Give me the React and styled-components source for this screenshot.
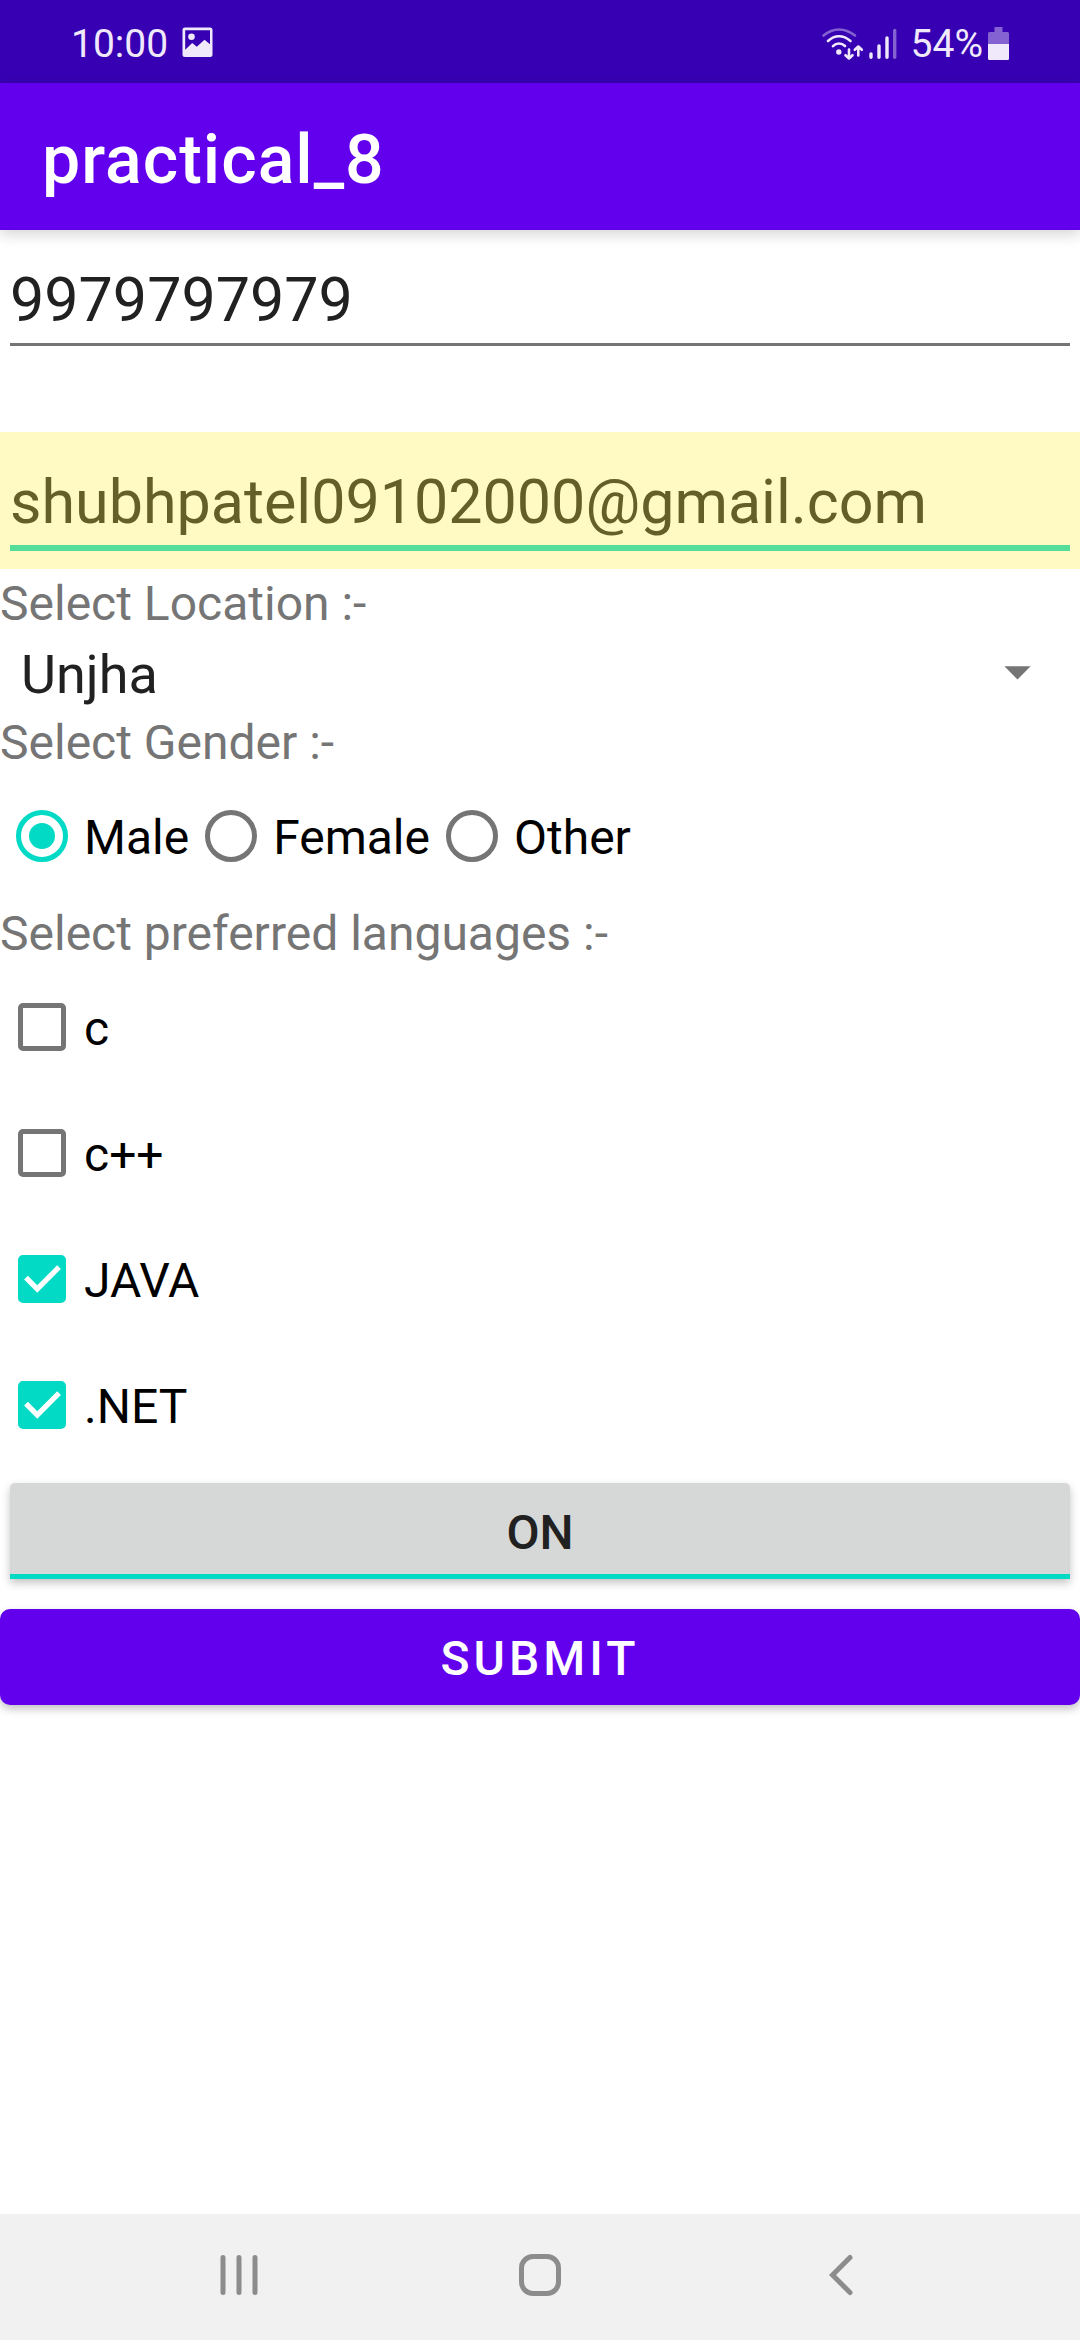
import React, { useState } from "react";
import styled, { createGlobalStyle } from "styled-components";

const GlobalStyle = createGlobalStyle`
  *, *::before, *::after { box-sizing: border-box; }
  body { margin: 0; background: #fff; }
  body, input, select, button { font-family: Roboto, "Liberation Sans", sans-serif; }
`;

const Screen = styled.div`
  display: flex;
  flex-direction: column;
  min-height: 100vh;
`;

const StatusBar = styled.div`
  display: flex;
  align-items: center;
  justify-content: space-between;
  padding: 20px 71px 16px;
  background: #3700b3;
  color: #f0e9fb;
`;

const StatusGroup = styled.div`
  display: flex;
  align-items: center;
  gap: ${(p) => p.$gap}px;
`;

const StatusText = styled.span`
  padding-top: 2px;
  font-size: 39px;
  line-height: 45px;
`;

const AppBar = styled.header`
  display: flex;
  align-items: center;
  height: 147px;
  padding: 6px 42px 0;
  background: #6200ee;
  box-shadow: 0 4px 14px rgba(0, 0, 0, 0.18);
`;

const Title = styled.h1`
  margin: 0;
  color: #fff;
  font-size: 68px;
  font-weight: 500;
  line-height: 80px;
  letter-spacing: 1px;
`;

const Form = styled.form`
  display: flex;
  flex-direction: column;
  flex: 1;
`;

const Field = styled.div`
  height: 137px;
  padding: 0 10px;
  margin-bottom: ${(p) => (p.$autofilled ? 0 : 65)}px;
  background: ${(p) => (p.$autofilled ? "#fff9c4" : "transparent")};
`;

const TextInput = styled.input`
  display: block;
  width: 100%;
  height: ${(p) => (p.$autofilled ? 119 : 116)}px;
  padding: 27px 0 0;
  border: 0;
  border-bottom: ${(p) => (p.$autofilled ? "6px solid #54de9a" : "3px solid #757575")};
  border-radius: 0;
  outline: none;
  background: transparent;
  color: ${(p) => (p.$autofilled ? "#645e29" : "#212121")};
  font-size: 61px;
`;

const Caption = styled.label`
  padding: 5px 0 0;
  color: #757575;
  font-size: 48px;
  line-height: 60px;
`;

const Group = styled.fieldset`
  display: flex;
  flex-direction: column;
  min-width: 0;
  margin: 0;
  padding: 0;
  border: 0;
`;

const Legend = styled.legend`
  padding: 5px 0 0;
  color: #757575;
  font-size: 48px;
  line-height: 60px;
`;

const Spinner = styled.div`
  display: grid;
  grid-template-columns: 1fr 63px;
  align-items: center;
  height: 74px;
  padding-right: 31px;
`;

const Select = styled.select`
  grid-area: 1 / 1 / 2 / 3;
  height: 74px;
  padding: 6px 21px 0;
  border: 0;
  outline: none;
  appearance: none;
  background: transparent;
  color: #212121;
  font-size: 54px;
`;

const Arrow = styled.svg`
  grid-area: 1 / 2;
  width: 63px;
  height: 63px;
  pointer-events: none;
`;

const OptionRow = styled.div`
  display: flex;
`;

const Choice = styled.label`
  display: grid;
  grid-template-columns: 84px auto;
  align-items: center;
  justify-content: start;
  height: 126px;
  color: #000;
  font-size: 48px;
`;

const ChoiceText = styled.span`
  padding-top: 2px;
`;

const Radio = styled.input`
  display: grid;
  place-content: center;
  justify-self: center;
  width: 52px;
  height: 52px;
  margin: 0;
  border: 5px solid #757575;
  border-radius: 50%;
  appearance: none;

  &:checked { border-color: #03dac5; }
  &:checked::before {
    content: "";
    width: 26px;
    height: 26px;
    border-radius: 50%;
    background: #03dac5;
  }
`;

const Checkbox = styled.input`
  grid-area: 1 / 1;
  justify-self: center;
  width: 48px;
  height: 48px;
  margin: 0;
  border: 5px solid #757575;
  border-radius: 5px;
  appearance: none;

  &:checked { border-color: #03dac5; background: #03dac5; }
  & + svg { visibility: hidden; }
  &:checked + svg { visibility: visible; }
`;

const Check = styled.svg`
  grid-area: 1 / 1;
  justify-self: center;
  width: 63px;
  height: 63px;
  fill: #fff;
  pointer-events: none;
`;

const Toggle = styled.button`
  height: 96px;
  margin: 15px 10px;
  padding: 8px 0 0;
  border: 0;
  border-bottom: 5px solid ${(p) => (p.$on ? "#03dac5" : "#bdbdbd")};
  border-radius: 5px 5px 0 0;
  background: #d6d7d7;
  box-shadow: 0 4px 8px rgba(0, 0, 0, 0.24);
  color: #212121;
  font-size: 48px;
  font-weight: 500;
`;

const Submit = styled.button`
  height: 96px;
  margin: 15px 0;
  padding: 2px 0 0;
  border: 0;
  border-radius: 10px;
  background: #6200ee;
  box-shadow: 0 4px 8px rgba(0, 0, 0, 0.24);
  color: #fff;
  font-size: 48px;
  font-weight: 500;
  letter-spacing: 4px;
`;

const NavBar = styled.nav`
  display: grid;
  grid-template-columns: repeat(3, 1fr);
  height: 126px;
  padding: 0 88px;
  background: #f1f1f1;
`;

const NavButton = styled.button`
  display: grid;
  place-items: center;
  padding: 0 0 4px;
  border: 0;
  background: transparent;
  color: #8c8c8c;
`;

const PictureIcon = () => (
  <svg width="31" height="33" viewBox="0 0 31 33" aria-hidden="true">
    <path
      fill="currentColor"
      fillRule="evenodd"
      d="M3 0.500h25a2.500 2.500 0 0 1 2.500 2.500v24.500a2.500 2.500 0 0 1-2.500 2.500h-25a2.500 2.500 0 0 1-2.500-2.500v-24.500a2.500 2.500 0 0 1 2.500-2.500zM3.200 3.200v19.500l7-6.700 4.600 3.700 7.700-7 5.500 4.500v-14z"
    />
    <circle cx="9.500" cy="9.800" r="3.300" fill="currentColor" />
  </svg>
);

const WifiIcon = () => (
  <svg width="43" height="34" viewBox="0 0 43 34" aria-hidden="true">
    <g fill="none" stroke="currentColor" strokeWidth="2.600" strokeLinecap="round">
      <path d="M2.500 8.500Q10 2.500 18 2.500T34 8.500" opacity="0.42" />
      <path d="M7 14Q12 9.200 18 9.200T29.500 14" />
      <path d="M12 19.200Q14.500 16.500 18 16.500T24 19" />
    </g>
    <circle cx="17.800" cy="25" r="2.700" fill="currentColor" />
    <g fill="none" stroke="currentColor" strokeWidth="2.600" strokeLinecap="round" strokeLinejoin="round">
      <path d="M28 22.500V31M24.500 28.200L28 31.500L31.500 28.200" />
      <path d="M37.300 28.500V20M33.800 22.800L37.300 19.500L40.800 22.800" />
    </g>
  </svg>
);

const SignalIcon = () => (
  <svg width="28" height="32" viewBox="0 0 28 32" aria-hidden="true">
    <g stroke="currentColor" strokeWidth="3.400" strokeLinecap="round">
      <path d="M2 29.300V26M10 29.300V18M18 29.300V10" />
      <path d="M25.700 29.300V2.500" opacity="0.42" />
    </g>
  </svg>
);

const BatteryIcon = () => (
  <svg width="21" height="33" viewBox="0 0 21 33" aria-hidden="true">
    <path fill="currentColor" opacity="0.42" d="M6.500 0h8v5H19.500a1.500 1.500 0 0 1 1.500 1.500V17H0V6.500A1.500 1.500 0 0 1 1.500 5H6.500z" />
    <path fill="currentColor" d="M0 17h21v14.500a1.500 1.500 0 0 1-1.500 1.500h-18a1.500 1.500 0 0 1-1.500-1.500z" />
  </svg>
);

const RecentsIcon = () => (
  <svg width="40" height="42" viewBox="0 0 40 42" aria-hidden="true">
    <path d="M4 3.500V38.500M20 3.500V38.500M36 3.500V38.500" stroke="currentColor" strokeWidth="5" strokeLinecap="round" />
  </svg>
);

const HomeIcon = () => (
  <svg width="42" height="42" viewBox="0 0 42 42" aria-hidden="true">
    <rect x="2.500" y="2.500" width="37" height="37" rx="11.500" fill="none" stroke="currentColor" strokeWidth="5" />
  </svg>
);

const BackIcon = () => (
  <svg width="24" height="42" viewBox="0 0 24 42" aria-hidden="true">
    <path d="M21 3.500L3.500 21L21 38.500" fill="none" stroke="currentColor" strokeWidth="5" strokeLinecap="round" />
  </svg>
);

const genders = ["Male", "Female", "Other"];
const languages = ["c", "c++", "JAVA", ".NET"];

export default function App() {
  const [on, setOn] = useState(true);

  return (
    <Screen>
      <GlobalStyle />
      <StatusBar>
        <StatusGroup $gap={14}>
          <StatusText>10:00</StatusText>
          <PictureIcon />
        </StatusGroup>
        <StatusGroup $gap={14}>
          <StatusGroup $gap={5}>
            <WifiIcon />
            <SignalIcon />
          </StatusGroup>
          <StatusGroup $gap={5}>
            <StatusText>54%</StatusText>
            <BatteryIcon />
          </StatusGroup>
        </StatusGroup>
      </StatusBar>
      <AppBar>
        <Title>practical_8</Title>
      </AppBar>
      <Form onSubmit={(e) => e.preventDefault()}>
        <Field>
          <TextInput type="tel" aria-label="Phone" defaultValue="9979797979" />
        </Field>
        <Field $autofilled>
          <TextInput $autofilled type="email" aria-label="Email" defaultValue="shubhpatel09102000@gmail.com" />
        </Field>
        <Caption htmlFor="location">Select Location :-</Caption>
        <Spinner>
          <Select id="location" defaultValue="Unjha">
            <option>Unjha</option>
          </Select>
          <Arrow viewBox="0 0 24 24" aria-hidden="true">
            <path d="M7 10l5 5 5-5z" fill="#757575" />
          </Arrow>
        </Spinner>
        <Group>
          <Legend>Select Gender :-</Legend>
          <OptionRow>
            {genders.map((name) => (
              <Choice key={name}>
                <Radio type="radio" name="gender" defaultChecked={name === "Male"} />
                <ChoiceText>{name}</ChoiceText>
              </Choice>
            ))}
          </OptionRow>
        </Group>
        <Group>
          <Legend>Select preferred languages :-</Legend>
          {languages.map((name) => (
            <Choice key={name}>
              <Checkbox type="checkbox" defaultChecked={name === "JAVA" || name === ".NET"} />
              <Check viewBox="0 0 24 24" aria-hidden="true">
                <path d="M10 17l-5-5 1.410-1.410L10 14.170l7.590-7.590L19 8z" />
              </Check>
              <ChoiceText>{name}</ChoiceText>
            </Choice>
          ))}
        </Group>
        <Toggle type="button" $on={on} aria-pressed={on} onClick={() => setOn(!on)}>
          {on ? "ON" : "OFF"}
        </Toggle>
        <Submit type="submit">SUBMIT</Submit>
      </Form>
      <NavBar>
        <NavButton type="button" aria-label="Recent apps"><RecentsIcon /></NavButton>
        <NavButton type="button" aria-label="Home"><HomeIcon /></NavButton>
        <NavButton type="button" aria-label="Back"><BackIcon /></NavButton>
      </NavBar>
    </Screen>
  );
}
